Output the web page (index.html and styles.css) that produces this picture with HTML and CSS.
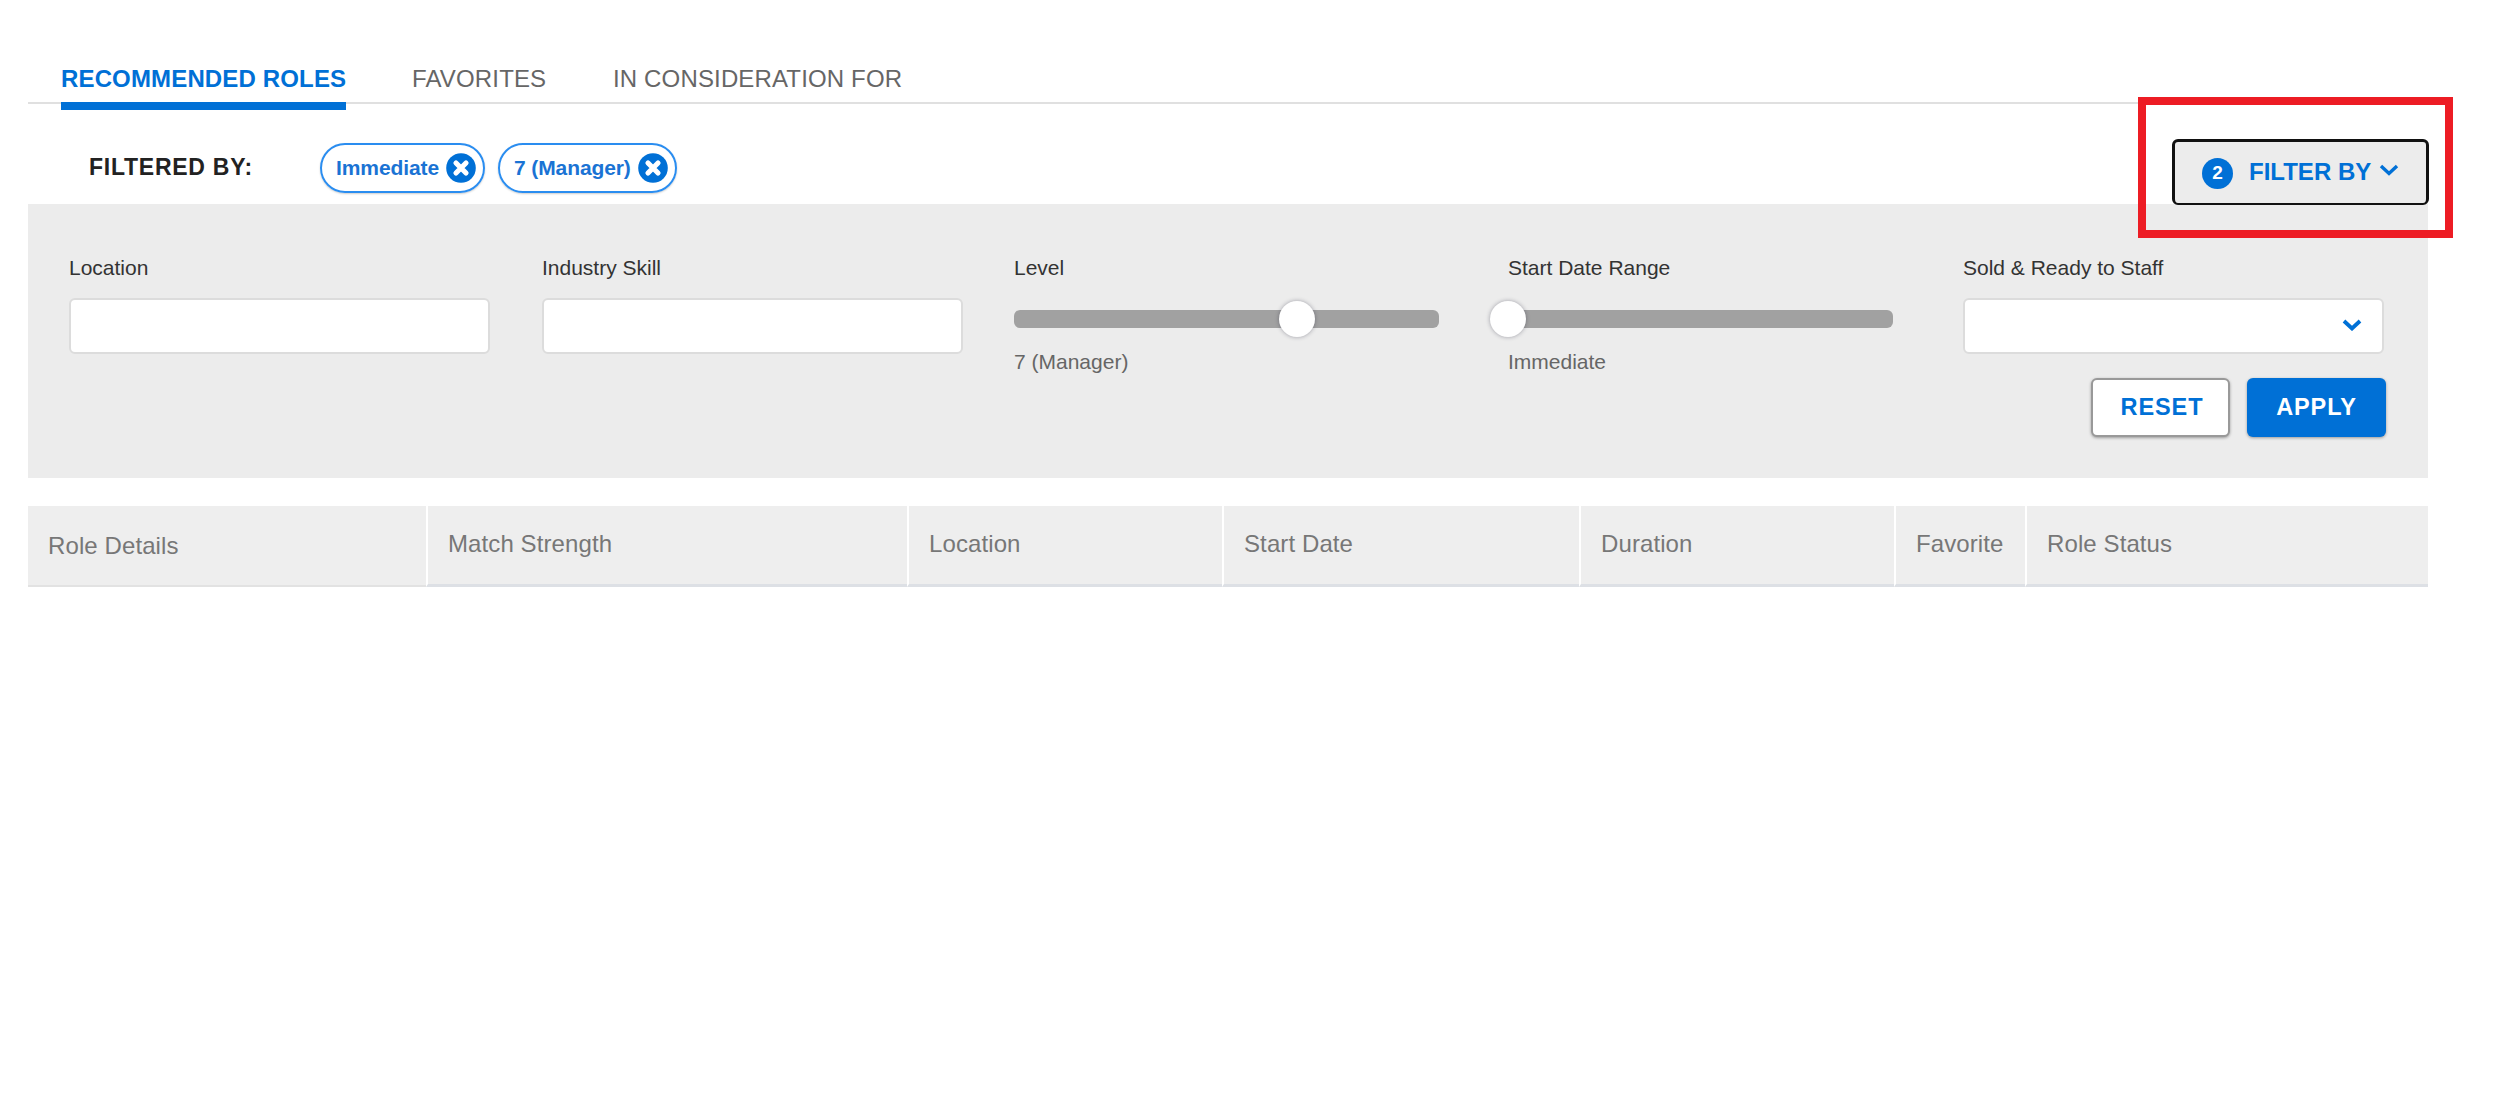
FILE: index.html
```
<!DOCTYPE html>
<html lang="en">
<head>
    <meta charset="UTF-8">
    <meta name="viewport" content="width=device-width, initial-scale=1.0">
    <title>Recommended Roles</title>
    <link rel="stylesheet" href="styles.css">
</head>
<body>
    <div class="page">
        <nav class="tabs">
            <a class="tab active">RECOMMENDED ROLES</a>
            <a class="tab favorites">FAVORITES</a>
            <a class="tab">IN CONSIDERATION FOR</a>
        </nav>

        <div class="filter-bar">
            <span class="filtered-by">FILTERED BY:</span>
            <div class="chip">
                <span>Immediate</span>
                <svg class="chip-close" viewBox="0 0 30 30">
                    <circle cx="15" cy="15" r="14.8" fill="#0070d6"/>
                    <path d="M10 10L20 20M20 10L10 20" stroke="#fff" stroke-width="5.2" stroke-linecap="round"/>
                </svg>
            </div>
            <div class="chip">
                <span>7 (Manager)</span>
                <svg class="chip-close" viewBox="0 0 30 30">
                    <circle cx="15" cy="15" r="14.8" fill="#0070d6"/>
                    <path d="M10 10L20 20M20 10L10 20" stroke="#fff" stroke-width="5.2" stroke-linecap="round"/>
                </svg>
            </div>
            <button type="button" class="filter-btn">
                <span class="count">2</span>
                <span class="filter-text">FILTER BY</span>
                <svg class="chevron" viewBox="0 0 20 12">
                    <path d="M2 2L10 9.5L18 2" fill="none" stroke="#0070d6" stroke-width="3.4"/>
                </svg>
            </button>
            <div class="highlight"></div>
        </div>

        <form class="panel">
            <div class="fields">
                <div class="field">
                    <label for="location">Location</label>
                    <input type="text" id="location" class="box">
                </div>
                <div class="field">
                    <label for="skill">Industry Skill</label>
                    <input type="text" id="skill" class="box">
                </div>
                <div class="field level">
                    <label>Level</label>
                    <div class="slider">
                        <div class="thumb" style="left: 66.6%"></div>
                    </div>
                    <div class="value">7 (Manager)</div>
                </div>
                <div class="field start">
                    <label>Start Date Range</label>
                    <div class="slider">
                        <div class="thumb" style="left: 0%"></div>
                    </div>
                    <div class="value">Immediate</div>
                </div>
                <div class="field">
                    <label>Sold &amp; Ready to Staff</label>
                    <div class="box select">
                        <svg class="chevron" viewBox="0 0 20 12">
                            <path d="M2 2L10 9.5L18 2" fill="none" stroke="#0070d6" stroke-width="3.8"/>
                        </svg>
                    </div>
                </div>
            </div>
            <div class="btn-container">
                <button type="button" class="btn reset-btn">RESET</button>
                <button type="button" class="btn apply-btn">APPLY</button>
            </div>
        </form>

        <table class="roles">
            <colgroup>
                <col class="c-details">
                <col class="c-match">
                <col class="c-location">
                <col class="c-start">
                <col class="c-duration">
                <col class="c-favorite">
                <col class="c-status">
            </colgroup>
            <thead>
                <tr>
                    <th class="details">Role Details</th>
                    <th>Match Strength</th>
                    <th>Location</th>
                    <th>Start Date</th>
                    <th>Duration</th>
                    <th>Favorite</th>
                    <th>Role Status</th>
                </tr>
            </thead>
        </table>
    </div>
</body>
</html>
```
FILE: styles.css
```
* {
    box-sizing: border-box;
}
body {
    margin: 0;
    background-color: #fff;
    font-family: "Liberation Sans", Arial, sans-serif;
    color: #333;
}
.page {
    width: 2400px;
    margin-left: 28px;
}

/* tabs */
.tabs {
    display: flex;
    align-items: flex-start;
    height: 104px;
    padding: 65px 0 0 33px;
    border-bottom: 2px solid #e0e0e0;
}
.tab {
    font-size: 24px;
    line-height: 28px;
    letter-spacing: 0.15px;
    color: #666;
    margin-right: 65px;
    white-space: nowrap;
}
.tab.active {
    width: 285px;
    margin-right: 66px;
    padding-bottom: 9px;
    border-bottom: 8px solid #0070d6;
    font-weight: bold;
    color: #0070d6;
}
.tab.favorites {
    width: 136px;
}

/* active filters */
.filter-bar {
    position: relative;
    display: flex;
    align-items: flex-start;
    height: 100px;
    padding-left: 61px;
}
.filtered-by {
    width: 231px;
    margin-top: 49px;
    font-size: 23px;
    line-height: 28px;
    font-weight: bold;
    letter-spacing: 0.75px;
    color: #222;
}
.chip {
    display: flex;
    align-items: center;
    height: 50px;
    margin: 39px 13px 0 0;
    padding: 0 7px 0 14px;
    border: 2px solid #2a8df0;
    border-radius: 25px;
    box-shadow: 0 1px 2px rgba(0, 0, 0, 0.2);
    font-size: 21px;
    font-weight: bold;
    letter-spacing: -0.1px;
    color: #1a73d4;
}
.chip-close {
    width: 30px;
    height: 30px;
    margin-left: 7px;
}
.filter-btn {
    display: flex;
    align-items: center;
    width: 257px;
    height: 66px;
    margin: 35px -1px 0 auto;
    padding: 0 0 2px 27px;
    background-color: #ececec;
    border: 3px solid #111;
    border-bottom-width: 2px;
    border-radius: 6px;
    font-family: inherit;
    font-size: 24px;
    font-weight: bold;
    color: #0070d6;
}
.count {
    width: 31px;
    height: 31px;
    margin: 4px 16px 0 0;
    border-radius: 50%;
    background-color: #0070d6;
    color: #fff;
    font-size: 19px;
    line-height: 30px;
    text-align: center;
}
.filter-text {
    width: 122px;
    white-space: nowrap;
}
.chevron {
    width: 20px;
    height: 12px;
}
.filter-btn .chevron {
    margin: 0 0 4px 8px;
}
.highlight {
    position: absolute;
    top: -7px;
    right: -25px;
    width: 315px;
    height: 141px;
    border: 8.5px solid #ed1c24;
}

/* filter panel */
.panel {
    height: 274px;
    padding: 52px 42px 0 41px;
    background-color: #ececec;
}
.fields {
    display: grid;
    grid-template-columns: 473px 472px 494px 455px 421px;
    height: 98px;
}
.field {
    width: 421px;
    font-size: 21px;
    line-height: 24px;
}
.field label {
    display: block;
    margin-bottom: 18px;
}
.level {
    width: 425px;
}
.start {
    width: 385px;
}
.box {
    display: block;
    width: 100%;
    height: 56px;
    background-color: #fff;
    border: 2px solid #dcdcdc;
    border-radius: 6px;
}
.select {
    display: flex;
    align-items: center;
    justify-content: flex-end;
    padding: 0 20px 3px 0;
}
.slider {
    position: relative;
    height: 18px;
    margin-top: 30px;
    background-color: #a1a1a1;
    border-radius: 6px;
}
.thumb {
    position: absolute;
    top: -9px;
    width: 36px;
    height: 36px;
    margin-left: -18px;
    border-radius: 50%;
    background-color: #fff;
    box-shadow: 0 0 4px rgba(40, 40, 60, 0.4);
}
.value {
    margin-top: 22px;
    color: #666;
}
.btn-container {
    display: flex;
    justify-content: flex-end;
    gap: 17px;
    margin-top: 24px;
}
.btn {
    width: 139px;
    height: 59px;
    border-radius: 6px;
    padding: 0;
    font-family: inherit;
    font-size: 23.5px;
    font-weight: bold;
    letter-spacing: 0.9px;
    box-shadow: 0 1px 3px rgba(0, 0, 0, 0.35);
}
.reset-btn {
    padding-left: 3px;
    background-color: #fff;
    border: 2px solid #999;
    color: #0070d6;
}
.apply-btn {
    background-color: #0070d6;
    border: none;
    color: #fff;
}

/* roles table */
.roles {
    width: 2400px;
    height: 81px;
    margin-top: 28px;
    table-layout: fixed;
    border-collapse: separate;
    border-spacing: 0;
    background-color: #eee;
}
.roles th {
    padding: 0 0 2px 20px;
    border-left: 2px solid #fff;
    border-bottom: 3px solid #dde0e5;
    font-size: 24px;
    font-weight: normal;
    letter-spacing: 0.1px;
    text-align: left;
    color: #777;
}
.roles th.details {
    padding: 1px 0 0 20px;
    border-left: none;
    border-bottom: 2px solid #e2e2e2;
}
.c-details {
    width: 398px;
}
.c-match {
    width: 481px;
}
.c-location {
    width: 315px;
}
.c-start {
    width: 357px;
}
.c-duration {
    width: 315px;
}
.c-favorite {
    width: 131px;
}
.c-status {
    width: 403px;
}
```
